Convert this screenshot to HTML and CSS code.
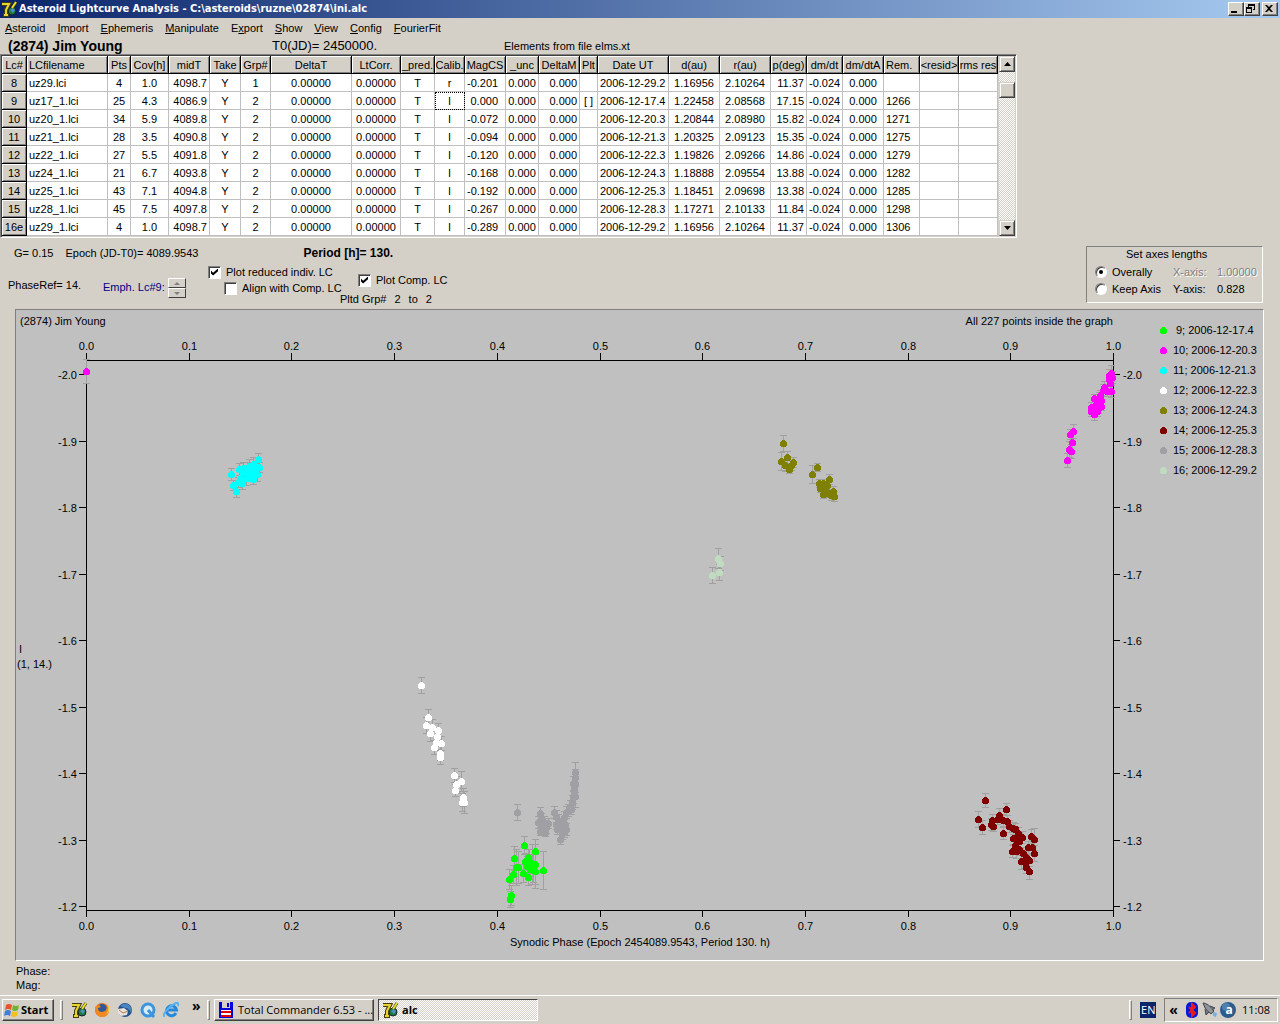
FILE: index.html
```html
<!DOCTYPE html>
<html lang="en">
<head>
    <meta charset="UTF-8">
    <meta name="viewport" content="width=device-width, initial-scale=1.0">
    <title>Asteroid Lightcurve Analysis</title>
    <link rel="stylesheet" href="styles.css">
</head>
<body>
    <!-- shared icon -->
    <svg class="defs" width="0" height="0">
        <symbol id="seven" viewBox="0 0 16 16">
            <circle cx="11" cy="10" r="4" fill="#1c7a3c" stroke="#123" />
            <path d="M9 9l3-2 2 2-2 3z" fill="#4a8ad0" />
            <path d="M1 3h7L5 9v5M2 14h6" fill="none" stroke="#443c10" stroke-width="4" />
            <path d="M1 3h7L5 9v5M3 14h4" fill="none" stroke="#e8d430" stroke-width="2" />
            <path d="M15 1l-4 6" stroke="#443c10" stroke-width="3" />
            <path d="M15 1l-4 6" stroke="#e8e020" stroke-width="2" />
        </symbol>
    </svg>

    <header class="titlebar">
        <svg class="icon"><use href="#seven" /></svg>
        <span class="caption">Asteroid Lightcurve Analysis - C:\asteroids\ruzne\02874\ini.alc</span>
        <button class="win-btn" aria-label="Minimize"><svg viewBox="0 0 12 10"><path d="M2 7h6v2H2z" /></svg></button>
        <button class="win-btn" aria-label="Restore"><svg viewBox="0 0 12 10"><path d="M3 0h7v6H8V5h1V2H4v1H3zM1 3h6v6H1zM2 5v3h4V5z" fill-rule="evenodd" /></svg></button>
        <button class="win-btn close" aria-label="Close"><svg viewBox="0 0 12 10"><path d="M2 1h2l2 2 2-2h2L7 4.500l3 3.500H8L6 6 4 8H2l3-3.500z" /></svg></button>
    </header>

    <nav class="menu">
        <a href="#"><u>A</u>steroid</a>
        <a href="#"><u>I</u>mport</a>
        <a href="#"><u>E</u>phemeris</a>
        <a href="#"><u>M</u>anipulate</a>
        <a href="#">E<u>x</u>port</a>
        <a href="#"><u>S</u>how</a>
        <a href="#"><u>V</u>iew</a>
        <a href="#"><u>C</u>onfig</a>
        <a href="#"><u>F</u>ourierFit</a>
    </nav>

    <main>
        <div class="object-row">
            <h1>(2874) Jim Young</h1>
            <span class="t0">T0(JD)= 2450000.</span>
            <span>Elements from file elms.xt</span>
        </div>

        <div class="grid-frame">
            <table id="lcTable">
                <colgroup id="lcCols"></colgroup>
                <thead><tr id="lcHead"></tr></thead>
                <tbody id="lcBody"></tbody>
            </table>
            <div class="scrollbar">
                <button class="sb-btn" aria-label="Scroll up"><svg viewBox="0 0 7 4"><path d="M0 4h7L3.500 0z" /></svg></button>
                <div class="sb-thumb"></div>
                <button class="sb-btn down" aria-label="Scroll down"><svg viewBox="0 0 7 4"><path d="M0 0h7L3.500 4z" /></svg></button>
            </div>
        </div>

        <div class="controls">
            <div class="settings">
                <div class="values">
                    <span>G= 0.15</span>
                    <span class="epoch">Epoch (JD-T0)= 4089.9543</span>
                    <b>Period [h]= 130.</b>
                </div>
                <div class="options">
                    <span class="phase-ref">PhaseRef= 14.</span>
                    <span class="emph">Emph. Lc#9:</span>
                    <div class="spin">
                        <button aria-label="Next"><svg viewBox="0 0 6 3"><path d="M0 3h6L3 0z" /></svg></button>
                        <button aria-label="Previous"><svg viewBox="0 0 6 3"><path d="M0 0h6L3 3z" /></svg></button>
                    </div>
                    <div class="checks">
                        <label><input type="checkbox" checked> Plot reduced indiv. LC</label>
                        <label class="indent"><input type="checkbox"> Align with Comp. LC</label>
                    </div>
                    <div class="comp">
                        <label><input type="checkbox" checked> Plot Comp. LC</label>
                        <div class="groups"><span>Pltd Grp#</span><span>2</span><span>to</span><span>2</span></div>
                    </div>
                </div>
            </div>
            <div class="axes-box">
                <div class="axes-title">Set axes lengths</div>
                <label><input type="radio" name="axes" checked> Overally</label>
                <span class="off">X-axis:</span><span class="off">1.00000</span>
                <label><input type="radio" name="axes"> Keep Axis</label>
                <span>Y-axis:</span><span>0.828</span>
            </div>
        </div>

        <div class="plot">
            <svg id="chart" viewBox="16 310 1247 650" role="img" aria-label="Lightcurve plot"></svg>
        </div>

        <div class="status">
            <div>Phase:</div>
            <div>Mag:</div>
        </div>
    </main>

    <footer class="taskbar">
        <button class="start">
            <svg class="icon" viewBox="0 0 16 16">
                <path d="M2 3q3-2 6 0L7 8Q4 6 1 8z" fill="#e8542c" />
                <path d="M9 3q3 2 6 0l-1 5q-3 2-6 0z" fill="#6cb52c" />
                <path d="M1 9q3-2 6 0l-1 5q-3-2-6 0z" fill="#3f7fd8" />
                <path d="M8 9q3 2 6 0l-1 5q-3 2-6 0z" fill="#f4c020" />
            </svg>
            Start
        </button>
        <span class="grip"></span>
        <div class="quick">
            <a href="#" aria-label="alc"><svg class="icon"><use href="#seven" /></svg></a>
            <a href="#" aria-label="Firefox"><svg class="icon" viewBox="0 0 16 16">
                <circle cx="8" cy="8" r="7" fill="#e0701c" />
                <circle cx="8" cy="7" r="5" fill="#2c5a9c" />
                <path d="M1 5q0 10 8 10 6-1 6-8 0-3-2-5 1 7-5 8-4 0-4-4l3-1-2-2q-2 0-4 2z" fill="#f08a1c" />
                <path d="M13 3q3 5-1 9 5-2 2-9z" fill="#f8d030" />
            </svg></a>
            <a href="#" aria-label="Thunderbird"><svg class="icon" viewBox="0 0 16 16">
                <circle cx="8" cy="8" r="7" fill="#24508c" />
                <path d="M1 7l6-1 4 3-1 4-6 1-3-3z" fill="#e8e4dc" />
                <path d="M2 8l4 3 5-2" fill="none" stroke="#b07850" />
                <path d="M3 4q4-4 9-1 4 3 2 8-2-5-6-5z" fill="#4c84c0" />
            </svg></a>
            <a href="#" aria-label="QuickTime"><svg class="icon" viewBox="0 0 16 16">
                <circle cx="8" cy="8" r="6" fill="#d8ecf8" stroke="#3c94dc" stroke-width="3" />
                <path d="M8 8l6 7" stroke="#3c94dc" stroke-width="3" />
            </svg></a>
            <a href="#" aria-label="Internet Explorer"><svg class="icon" viewBox="0 0 16 16">
                <path d="M13 11a5 5 0 1 1 .500-3H4" fill="none" stroke="#2488dc" stroke-width="3" />
                <path d="M2 14q-3 0 1-5T13 1q3-1 2 3" fill="none" stroke="#58b0f0" stroke-width="2" />
            </svg></a>
        </div>
        <span class="more">»</span>
        <span class="grip"></span>
        <button class="task">
            <svg class="icon" viewBox="0 0 16 16">
                <path d="M1 0h14v16H1z" fill="#0000d8" />
                <path d="M4 0h8v6H4z" fill="#d4d0c8" />
                <path d="M9 1h2v4H9z" fill="#0000d8" />
                <path d="M3 8h10v7H3z" fill="#fff" />
                <path d="M3 9h10v2H3zM3 13h10v2H3z" fill="#e00000" />
            </svg>
            <span>Total Commander 6.53 - ...</span>
        </button>
        <button class="task active">
            <svg class="icon"><use href="#seven" /></svg>
            <span>alc</span>
        </button>
        <span class="grip lang-grip"></span>
        <span class="lang">EN</span>
        <div class="tray">
            <span class="less">«</span>
            <svg class="icon" viewBox="0 0 16 16">
                <rect x="2" y="0" width="12" height="16" rx="5" fill="#0818d8" />
                <path d="M5 5l6 6-3 3V2l3 3-6 6" fill="none" stroke="#f01818" stroke-width="2" />
            </svg>
            <svg class="icon" viewBox="0 0 16 16">
                <path d="M1 1q5 0 11 8l-3 3Q2 7 1 1z" fill="#909498" stroke="#40444c" />
                <path d="M3 7l1 6 3-3M8 4l5 2-3 2" fill="#707880" stroke="#40444c" />
                <path d="M11 10l4 1-1 4-3-1z" fill="#68b4f0" />
            </svg>
            <svg class="icon" viewBox="0 0 16 16">
                <circle cx="8" cy="8" r="8" fill="#2c5c8c" />
                <circle cx="6" cy="5" r="4" fill="#4c80b0" />
                <text x="9" y="12" class="a-mark">a</text>
            </svg>
            <span class="clock">11:08</span>
        </div>
    </footer>
    <script src="script.js"></script>
</body>
</html>
```
FILE: styles.css
```css
* { box-sizing: border-box; }
body {
    margin: 0;
    min-height: 100vh;
    display: flex;
    flex-direction: column;
    background-color: #d4d0c8;
    color: #000;
    font-family: "Liberation Sans", Arial, sans-serif;
    font-size: 11px;
    line-height: 14px;
    white-space: nowrap;
}
button { font: inherit; color: inherit; padding: 0; margin: 0; background-color: #d4d0c8; }
a { color: inherit; text-decoration: none; }
.defs { position: absolute; }
.icon { width: 16px; height: 16px; display: block; flex: none; }

/* title bar */
.titlebar {
    display: flex;
    align-items: center;
    height: 18px;
    padding: 0 2px 0 1px;
    background: linear-gradient(to right, #0a246a, #a6caf0);
    color: #fff;
}
.caption { flex: 1; margin-left: 2px; font-family: "DejaVu Sans Condensed", "DejaVu Sans", sans-serif; font-weight: bold; }
.win-btn {
    width: 16px;
    height: 14px;
    border: 1px solid;
    border-color: #fff #404040 #404040 #fff;
    box-shadow: inset -1px -1px 0 #808080;
}
.win-btn svg { display: block; width: 12px; height: 10px; }
.close { margin-left: 2px; }

/* menu */
.menu { display: flex; gap: 12px; padding: 3px 5px 2px; height: 20px; }

.object-row { display: flex; align-items: center; height: 16px; padding-left: 8px; }
h1 { margin: 0; width: 264px; font-size: 14px; line-height: 16px; }
.t0 { width: 232px; font-size: 13px; }

/* table of lightcurves */
.grid-frame {
    display: flex;
    width: max-content;
    max-width: 100%;
    border: 1px solid;
    border-color: #808080 #fff #fff #808080;
    box-shadow: inset 1px 1px 0 #404040;
    padding: 1px 1px 1px 1px;
}
table { border-collapse: separate; border-spacing: 0; table-layout: fixed; width: 996px; background-color: #fff; }
th, td { height: 18px; padding: 0 2px; overflow: hidden; text-align: center; line-height: 14px; border-right: 1px solid #c0c0c0; border-bottom: 1px solid #c0c0c0; }
th {
    padding: 0;
    font-weight: normal;
    background-color: #d4d0c8;
    border-color: #000;
    box-shadow: inset 1px 1px 0 #fff, inset -1px -1px 0 #808080;
}
.left { padding-left: 2px; text-align: left; }
.right { text-align: right; }
.far { padding-right: 7px; }
td.focus { outline: 1px dotted #000; outline-offset: -1px; }
.scrollbar {
    width: 16px;
    margin-left: 1px;
    display: flex;
    flex-direction: column;
    background: repeating-conic-gradient(#fff 0 25%, #d4d0c8 0 50%) 0 0 / 2px 2px;
}
.sb-btn, .sb-thumb {
    width: 16px;
    height: 16px;
    background-color: #d4d0c8;
    border: 1px solid;
    border-color: #d4d0c8 #404040 #404040 #d4d0c8;
    box-shadow: inset 1px 1px 0 #fff, inset -1px -1px 0 #808080;
}
.sb-btn svg { display: block; width: 7px; height: 4px; margin: auto; }
.sb-thumb { margin-top: 10px; }
.down { margin-top: auto; }

/* controls above the plot */
.controls { display: flex; justify-content: space-between; height: 71px; padding: 8px 17px 0 8px; }
.values { display: flex; padding-left: 6px; }
.epoch { margin-left: 12px; width: 238px; }
.values b { font-size: 12px; }
.options { display: flex; align-items: center; height: 46px; }
.phase-ref { width: 95px; margin-top: 4px; }
.emph { width: 65px; margin-top: 8px; color: #000080; }
.spin { display: flex; flex-direction: column; width: 18px; margin-top: 10px; }
.spin button { height: 10px; border: 1px solid; border-color: #fff #404040 #404040 #fff; }
.spin svg { display: block; width: 6px; margin: auto; fill: #808080; }
.checks { margin: -6px 0 0 22px; width: 132px; }
.comp { margin-top: 12px; }
label { display: flex; align-items: center; gap: 5px; height: 16px; }
.indent { margin-left: 16px; }
.comp label { margin-left: 18px; }
.groups { display: flex; gap: 8px; margin-top: 4px; }
input { flex: none; appearance: none; margin: 0; width: 13px; height: 13px; background-color: #fff; border: 1px solid; border-color: #808080 #fff #fff #808080; box-shadow: inset 1px 1px 0 #404040; }
input[type="checkbox"]:checked::before {
    content: "";
    display: block;
    width: 7px;
    height: 7px;
    margin: 2px;
    background-color: #000;
    clip-path: polygon(0 30%, 30% 60%, 100% 0, 100% 40%, 30% 100%, 0 70%);
}
input[type="radio"] { width: 12px; height: 12px; border-radius: 50%; }
input[type="radio"]:checked::before { content: ""; display: block; width: 4px; height: 4px; margin: 3px; border-radius: 50%; background-color: #000; }
.axes-box {
    display: grid;
    grid-template-columns: 78px 44px 1fr;
    align-content: start;
    align-items: center;
    width: 177px;
    height: 57px;
    padding-left: 8px;
    border: 1px solid;
    border-color: #808080 #fff #fff #808080;
}
.axes-title { grid-column: 1 / -1; padding-left: 31px; height: 16px; }
.axes-box label { height: 17px; }
.off { color: #808080; text-shadow: 1px 1px 0 #fff; }

/* plot */
.plot { margin: 0 16px 0 15px; background-color: #c0c0c0; border: 1px solid; border-color: #808080 #fff #fff #808080; }
#chart { display: block; width: 100%; font-size: 11px; }
.axis { fill: none; stroke: #000; shape-rendering: crispEdges; }
.bar { fill: none; stroke: #a0a0a0; shape-rendering: crispEdges; }
.mid { text-anchor: middle; }
.end { text-anchor: end; }
.status { padding: 3px 16px; }

/* taskbar */
.taskbar {
    display: flex;
    align-items: center;
    height: 29px;
    margin-top: auto;
    padding: 0 2px;
    border-top: 1px solid #fff;
    font-family: "Open Sans", "Noto Sans", sans-serif;
}
.start, .task { display: flex; align-items: center; height: 22px; border: 1px solid; border-color: #fff #404040 #404040 #fff; box-shadow: inset -1px -1px 0 #808080; }
.start { gap: 1px; width: 52px; padding-left: 1px; font-weight: bold; }
.grip { width: 3px; height: 20px; margin-left: 6px; border: 1px solid; border-color: #fff #808080 #808080 #fff; }
.quick { display: flex; gap: 7px; margin-left: 8px; }
.more { width: 8px; margin: -8px 1px 0 13px; font-size: 14px; font-weight: bold; }
.task { gap: 4px; width: 160px; padding-left: 3px; margin-left: 4px; }
.active {
    font-weight: bold;
    border-color: #404040 #fff #fff #404040;
    box-shadow: none;
    background: repeating-conic-gradient(#fff 0 25%, #d4d0c8 0 50%) 0 0 / 2px 2px;
}
.lang-grip { margin-left: auto; }
.lang { width: 16px; margin: 0 8px; background-color: #0a246a; color: #fff; text-align: center; line-height: 16px; }
.tray { display: flex; align-items: center; gap: 2px; height: 24px; padding: 0 7px 0 4px; border: 1px solid; border-color: #808080 #fff #fff #808080; }
.less { margin-right: 4px; font-weight: bold; font-size: 14px; }
.clock { margin-left: 4px; }
.a-mark { fill: #fff; font-size: 12px; font-weight: bold; text-anchor: middle; }
```
FILE: script.js
```js
// [title, width, cell class]
const columns = [
    ['Lc#', 25, ''], ['LCfilename', 81, 'left'], ['Pts', 23, ''], ['Cov[h]', 38, ''],
    ['midT', 41, 'right'], ['Take', 31, ''], ['Grp#', 30, ''], ['DeltaT', 81, ''],
    ['LtCorr.', 49, ''], ['_pred.', 34, ''], ['Calib.', 30, ''], ['MagCS', 41, 'right far'],
    ['_unc', 33, ''], ['DeltaM', 41, 'right'], ['Plt', 18, ''], ['Date UT', 71, 'left'],
    ['d(au)', 51, ''], ['r(au)', 51, ''], ['p(deg)', 36, 'right'], ['dm/dt', 36, ''],
    ['dm/dtA', 41, ''], ['Rem.', 36, 'left'], ['<resid>', 39, ''], ['rms res', 39, '']
];

// number, file, pts, cov, midT, group, calib, magCS, plt, date, d, r, p, remark
const rows = [
    ['8', 'uz29.lci', 4, '1.0', '4098.7', 1, 'r', '-0.201', '', '2006-12-29.2', '1.16956', '2.10264', '11.37', ''],
    ['9', 'uz17_1.lci', 25, '4.3', '4086.9', 2, 'I', '0.000', '[ ]', '2006-12-17.4', '1.22458', '2.08568', '17.15', '1266'],
    ['10', 'uz20_1.lci', 34, '5.9', '4089.8', 2, 'I', '-0.072', '', '2006-12-20.3', '1.20844', '2.08980', '15.82', '1271'],
    ['11', 'uz21_1.lci', 28, '3.5', '4090.8', 2, 'I', '-0.094', '', '2006-12-21.3', '1.20325', '2.09123', '15.35', '1275'],
    ['12', 'uz22_1.lci', 27, '5.5', '4091.8', 2, 'I', '-0.120', '', '2006-12-22.3', '1.19826', '2.09266', '14.86', '1279'],
    ['13', 'uz24_1.lci', 21, '6.7', '4093.8', 2, 'I', '-0.168', '', '2006-12-24.3', '1.18888', '2.09554', '13.88', '1282'],
    ['14', 'uz25_1.lci', 43, '7.1', '4094.8', 2, 'I', '-0.192', '', '2006-12-25.3', '1.18451', '2.09698', '13.38', '1285'],
    ['15', 'uz28_1.lci', 45, '7.5', '4097.8', 2, 'I', '-0.267', '', '2006-12-28.3', '1.17271', '2.10133', '11.84', '1298'],
    ['16e', 'uz29_1.lci', 4, '1.0', '4098.7', 2, 'I', '-0.289', '', '2006-12-29.2', '1.16956', '2.10264', '11.37', '1306']
];

function fillTable() {
    document.getElementById('lcCols').innerHTML = columns.map(c => `<col style="width:${c[1]}px">`).join('');
    document.getElementById('lcHead').innerHTML = columns.map(c =>
        `<th scope="col"${c[2] === 'left' && c[0] !== 'Date UT' ? ' class="left"' : ''}>${c[0].replace('<', '&lt;')}</th>`).join('');
    document.getElementById('lcBody').innerHTML = rows.map(r => {
        const [no, file, pts, cov, mid, grp, cal, mag, plt, date, d, rr, p, rem] = r;
        const cells = [no, file, pts, cov, mid, 'Y', grp, '0.00000', '0.00000', 'T', cal, mag,
            '0.000', '0.000', plt, date, d, rr, p, '-0.024', '0.000', rem, '', ''];
        return '<tr>' + cells.map((v, i) => {
            if (i === 0) return `<th scope="row">${v}</th>`;
            const focus = no === '9' && i === 10 ? ' focus' : '';
            return `<td class="${columns[i][2]}${focus}">${v}</td>`;
        }).join('') + '</tr>';
    }).join('');
}

// points are [x, y, half length of the error bar]
const series = [
    { name: '15; 2006-12-28.3', color: '#a0a0a4', points: [
        [517,812,8],[540,813,6],[538,822,6],[541,818,5],[544,822,6],[548,823,5],[546,827,6],[542,826,5],[540,831,4],[545,832,4],
        [554,812,6],[556,816,6],[558,820,6],[561,823,5],[559,828,6],[562,833,6],[560,839,5],[564,817,6],[566,812,6],[565,824,6],
        [566,829,6],[562,826,6],[564,832,5],[556,824,5],[557,829,5],[570,806,6],[568,810,6],[572,802,7],[575,796,11],[574,792,7],
        [574,788,7],[573,783,7],[575,777,8],[575,772,10],[571,809,5],[575,784,8],[573,797,6]] },
    { name: '9; 2006-12-17.4', color: '#00ff00', points: [
        [524,845,9],[535,851,12],[514,858,12],[516,867,18],[518,867,16],[513,874,9],[509,879,10],[511,895,10],[510,899,8],
        [528,857,8],[525,861,8],[532,864,20],[535,864,20],[530,869,9],[535,871,17],[523,873,9],[528,877,8],[527,866,10],
        [529,861,12],[533,868,14],[543,870,19]] },
    { name: '10; 2006-12-20.3', color: '#ff00ff', points: [
        [86,371,12],[1073,431,7],[1070,434,5],[1072,442,9],[1069,449,8],[1071,451,7],[1067,460,7],
        [1111,373,8],[1109,375,6],[1112,377,6],[1109,379,6],[1110,383,6],[1104,387,6],[1103,390,6],[1107,391,5],[1111,391,6],
        [1100,395,5],[1099,397,5],[1094,398,4],[1097,402,5],[1101,400,5],[1095,405,5],[1101,406,4],[1098,408,5],
        [1091,407,5],[1091,411,5],[1094,414,6],[1097,411,5]] },
    { name: '11; 2006-12-21.3', color: '#00ffff', points: [
        [231,474,6],[233,485,5],[240,478,6],[236,491,6],[239,469,6],[243,468,6],[242,483,6],[246,478,7],[243,472,5],[247,470,8],
        [249,466,7],[253,464,7],[258,459,6],[259,467,5],[254,469,6],[257,474,7],[253,479,5],[253,476,8],[250,473,7],[238,482,5]] },
    { name: '12; 2006-12-22.3', color: '#ffffff', points: [
        [421,685,8],[428,717,8],[426,725,8],[432,727,8],[430,733,8],[438,730,7],[437,736,8],[436,742,7],[441,743,7],[434,747,7],
        [440,753,7],[440,757,7],[454,775,7],[461,781,10],[456,784,8],[455,790,6],[463,797,9],[462,802,9],[464,802,11]] },
    { name: '13; 2006-12-24.3', color: '#808000', points: [
        [783,443,8],[781,461,9],[787,457,6],[785,465,6],[793,462,5],[791,465,5],[789,469,4],[812,474,9],[817,467,4],[829,479,5],
        [819,483,4],[823,483,4],[827,485,4],[820,488,4],[825,488,4],[823,494,4],[828,493,4],[833,491,5],[831,495,5],[834,496,5]] },
    { name: '14; 2006-12-25.3', color: '#800000', points: [
        [985,800,7],[1006,809,6],[978,819,8],[982,827,7],[992,820,6],[991,824,6],[993,826,5],[999,815,7],[997,819,5],[1003,833,6],
        [1003,820,6],[1007,821,6],[1009,826,6],[1013,828,6],[1015,829,6],[1018,833,6],[1013,838,6],[1017,837,6],[1022,837,6],
        [1019,841,6],[1031,836,7],[1034,839,11],[1015,845,6],[1012,851,6],[1016,851,7],[1019,849,6],[1023,853,6],[1028,847,6],
        [1032,847,7],[1034,853,8],[1026,857,6],[1021,861,8],[1025,862,6],[1029,860,6],[1026,867,6],[1029,871,8]] },
    { name: '16; 2006-12-29.2', color: '#c0dcc0', points: [
        [718,558,10],[720,563,7],[719,572,8],[712,575,8]] }
];

const box = { left: 86, right: 1113, top: 360, bottom: 910 };

function text(x, y, str, cls = '') {
    return `<text x="${x}" y="${y}" class="${cls}">${str}</text>`;
}

function dot(x, y, color) {
    return `<circle cx="${x + 0.5}" cy="${y + 0.5}" r="3.5" fill="${color}" shape-rendering="crispEdges"/>`;
}

function drawChart() {
    let s = text(20, 325, '(2874) Jim Young') + text(1113, 325, 'All 227 points inside the graph', 'end');
    s += text(19, 653, 'I') + text(17, 668, '(1, 14.)');
    s += text(640, 946, 'Synodic Phase (Epoch 2454089.9543, Period 130. h)', 'mid');

    // phase axes
    for (let i = 0; i <= 10; i++) {
        const x = Math.round(box.left + i * (box.right - box.left) / 10) + 0.5;
        s += `<path class="axis" d="M${x} 353v7M${x} 910v7"/>`;
        s += text(x, 350, (i / 10).toFixed(1), 'mid') + text(x, 930, (i / 10).toFixed(1), 'mid');
    }
    // magnitude axes
    for (let i = 0; i <= 8; i++) {
        const y = Math.round(374 + i * 66.5) + 0.5;
        const label = (-2 + i / 10).toFixed(1);
        s += `<path class="axis" d="M79 ${y}h7M1113 ${y}h7"/>`;
        s += text(77, y + 4, label, 'end') + text(1123, y + 4, label);
    }
    s += '<path class="axis" d="M86.5 360.5h1027v550h-1027z"/>';

    for (const set of series) {
        for (const [x, y, e] of set.points) {
            s += `<path class="bar" d="M${x + 0.5} ${y - e}v${2 * e}M${x - 3} ${y - e + 0.5}h7M${x - 3} ${y + e + 0.5}h7"/>`;
        }
        for (const [x, y] of set.points) s += dot(x, y, set.color);
    }

    // legend, in order of the lightcurve number
    [...series].sort((a, b) => parseInt(a.name) - parseInt(b.name)).forEach((set, i) => {
        const y = 330 + i * 20;
        s += dot(1163, y, set.color) + text(i ? 1173 : 1176, y + 4, set.name);
    });
    document.getElementById('chart').innerHTML = s;
}

fillTable();
drawChart();
```
